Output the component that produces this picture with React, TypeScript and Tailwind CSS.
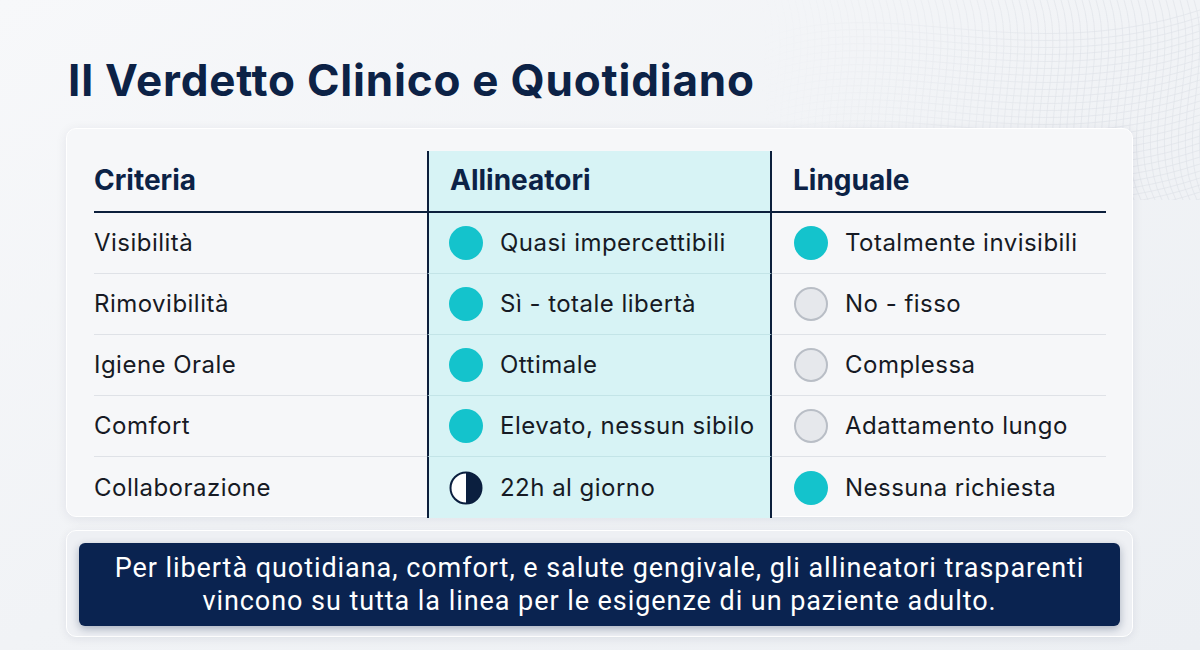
import React from "react";

type Mark = "full" | "empty" | "half";

const rows: { c: string; a: [Mark, string]; l: [Mark, string] }[] = [
  { c: "Visibilità", a: ["full", "Quasi impercettibili"], l: ["full", "Totalmente invisibili"] },
  { c: "Rimovibilità", a: ["full", "Sì - totale libertà"], l: ["empty", "No - fisso"] },
  { c: "Igiene Orale", a: ["full", "Ottimale"], l: ["empty", "Complessa"] },
  { c: "Comfort", a: ["full", "Elevato, nessun sibilo"], l: ["empty", "Adattamento lungo"] },
  { c: "Collaborazione", a: ["half", "22h al giorno"], l: ["full", "Nessuna richiesta"] },
];

function Dot({ m }: { m: Mark }) {
  if (m === "full") return <span className="w-[34px] h-[34px] rounded-full bg-[#14c3cc] shrink-0" />;
  if (m === "empty")
    return <span className="w-[34px] h-[34px] rounded-full bg-[#e6e8ec] border-2 border-[#b9bec6] shrink-0" />;
  return (
    <svg width="34" height="34" viewBox="0 0 34 34" className="shrink-0">
      <circle cx="17" cy="17" r="15.5" fill="#ffffff" stroke="#0b1f3f" strokeWidth="2" />
      <path d="M17 1.5 A15.5 15.5 0 0 1 17 32.5 Z" fill="#0b1f3f" />
    </svg>
  );
}

function Mesh() {
  const h: string[] = [];
  const v: string[] = [];
  for (let i = 0; i < 40; i++) {
    const y = i * 7;
    h.push(`M0 ${y + 40} C 120 ${y - 10}, 260 ${y + 70}, 440 ${y + 10}`);
  }
  for (let i = 0; i < 64; i++) {
    const x = i * 7;
    v.push(`M${x} 0 C ${x + 20} 60, ${x - 20} 140, ${x + 10} 200`);
  }
  return (
    <svg
      className="absolute right-0 top-0 pointer-events-none"
      width="440"
      height="200"
      viewBox="0 0 440 200"
      style={{ maskImage: "linear-gradient(to left, black 30%, transparent 100%)", WebkitMaskImage: "linear-gradient(to left, black 30%, transparent 100%)" }}
    >
      <g fill="none" stroke="#cfd4dc" strokeWidth="0.6" opacity="0.55">
        {h.map((d, i) => (
          <path key={"h" + i} d={d} />
        ))}
        {v.map((d, i) => (
          <path key={"v" + i} d={d} />
        ))}
      </g>
    </svg>
  );
}

export default function App() {
  return (
    <div
      className="w-[1200px] h-[650px] overflow-hidden bg-gradient-to-br from-[#f7f8fa] via-[#f1f3f6] to-[#eceff3] relative"
      style={{ fontFamily: "Inter, 'Noto Sans', sans-serif" }}
    >
      <Mesh />
      <div className="relative pl-[68px] pt-[54px]">
        <h1 className="text-[44px] leading-[52px] font-bold text-[#0c2246] tracking-[0.018em]">
          Il Verdetto Clinico e Quotidiano
        </h1>
      </div>
      <div className="relative ml-[66px] mt-[22px] w-[1067px] h-[389px] rounded-[10px] bg-[#f6f7f9] shadow-[0_2px_12px_rgba(15,30,60,0.08)] border border-white px-[27px] pt-[22px]">
        <div className="grid grid-cols-[333px_345px_334px] text-[#161a24] text-[24px] tracking-[0.02em]">
          <div className="h-[62px] flex items-center pb-[2px] border-b-2 border-[#0c1f3c] text-[28px] tracking-normal font-bold text-[#0c2246]">Criteria</div>
          <div className="h-[62px] flex items-center pb-[2px] pl-[21px] border-b-2 border-l-2 border-r-2 border-[#0c1f3c] bg-[#d7f3f5] text-[28px] tracking-normal font-bold text-[#0c2246]">
            Allineatori
          </div>
          <div className="h-[62px] flex items-center pb-[2px] pl-[21px] border-b-2 border-[#0c1f3c] text-[28px] tracking-normal font-bold text-[#0c2246]">Linguale</div>
          {rows.map((r, i) => {
            const last = i === rows.length - 1;
            const bb = last ? "" : "border-b border-b-[#dfe2e7]";
            return (
              <React.Fragment key={r.c}>
                <div className={`h-[61px] flex items-center ${bb}`}>{r.c}</div>
                <div className={`h-[61px] flex items-center gap-[17px] pl-[20px] bg-[#d7f3f5] border-l-2 border-r-2 border-l-[#0c1f3c] border-r-[#0c1f3c] ${last ? "" : "border-b border-b-[#c3e4e7]"}`}>
                  <Dot m={r.a[0]} />
                  <span>{r.a[1]}</span>
                </div>
                <div className={`h-[61px] flex items-center gap-[17px] pl-[22px] ${bb}`}>
                  <Dot m={r.l[0]} />
                  <span>{r.l[1]}</span>
                </div>
              </React.Fragment>
            );
          })}
        </div>
      </div>
      <div className="relative ml-[66px] mt-[13px] w-[1067px] h-[107px] rounded-[10px] bg-[#eef0f4] border border-white shadow-[0_2px_10px_rgba(15,30,60,0.08)] p-[12px]">
        <div
          className="h-[83px] rounded-[6px] bg-[#0a2350] text-white text-[27px] leading-[33px] tracking-[0.035em] flex items-center justify-center text-center shadow-[0_3px_8px_rgba(10,30,70,0.3)]"
          style={{ fontFamily: "Roboto, 'Noto Sans', sans-serif" }}
        >
          <p>
            Per libertà quotidiana, comfort, e salute gengivale, gli allineatori trasparenti
            <br />
            vincono su tutta la linea per le esigenze di un paziente adulto.
          </p>
        </div>
      </div>
    </div>
  );
}
